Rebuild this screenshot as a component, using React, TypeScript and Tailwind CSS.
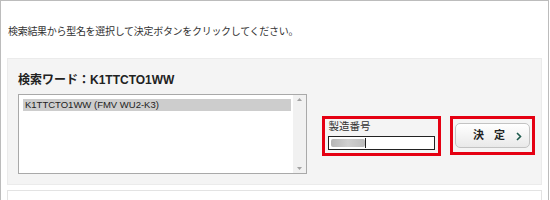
import React from "react";

const jp = { fontFamily: '"Liberation Sans", "Noto Sans CJK JP", sans-serif' };

export default function App() {
  return (
    <div className="w-[550px] h-[200px] overflow-hidden bg-white" style={jp}>
      <div className="w-[549px] h-[210px] border-l border-t border-r border-[#bcbcbc] px-[6px]">
        <p className="pt-[25px] pl-[1px] text-[10px] leading-[12px] text-[#333] tracking-[-0.3px]">
          検索結果から型名を選択して決定ボタンをクリックしてください。
        </p>
        <div className="mt-[20px] h-[127px] bg-[#f4f4f4] border border-[#ebebeb] pl-[10px] pr-[6px]">
          <h2 className="mt-[14px] text-[12px] leading-[14px] font-bold text-[#222]">
            検索ワード：K1TTCTO1WW
          </h2>
          <div className="mt-[7px] flex items-start">
            <div className="w-[290px] h-[80px] bg-white border border-[#a9a9a9] flex">
              <div className="flex-1 pt-[4px] pl-[4px] pr-[2px]">
                <div className="h-[12px] bg-[#cdcdcd] text-[9.5px] leading-[12px] text-[#222] pl-[2px]">
                  K1TTCTO1WW (FMV WU2-K3)
                </div>
              </div>
              <div className="w-[13px] bg-[#f1f1f1] flex flex-col justify-between items-center py-[3px]">
                <svg width="5" height="3" viewBox="0 0 5 3"><path d="M0 3 L2.5 0 L5 3 Z" fill="#a3a3a3" /></svg>
                <svg width="5" height="3" viewBox="0 0 5 3"><path d="M0 0 L2.5 3 L5 0 Z" fill="#a3a3a3" /></svg>
              </div>
            </div>
            <div className="ml-[15px] mt-[22px] w-[119px] h-[40px] border-[3px] border-[#e50012] pl-[3px] pt-[1px]">
              <div className="text-[10.5px] leading-[13px] text-[#333]">製造番号</div>
              <div className="mt-[3px] w-[107px] h-[14px] border-[1.5px] border-[#222] bg-white flex items-center px-[2px]">
                <div className="w-[34px] h-[8px] bg-gradient-to-r from-[#b5b5b5] via-[#cfcfcf] to-[#bdbdbd] rounded-[2px]" />
                <div className="w-[1px] h-[10px] bg-[#222]" />
              </div>
            </div>
            <div className="ml-[9px] mt-[22px] w-[85px] h-[39px] border-[3px] border-[#e50012] flex items-center justify-center">
              <div className="w-[75px] h-[25px] rounded-[5px] border border-[#c3c3c3] bg-gradient-to-b from-white to-[#e9e9e9] flex items-center relative">
                <span className="ml-[17px] text-[11px] font-bold text-[#222] tracking-[10px]">決定</span>
                <svg className="absolute right-[7px] top-[8px]" width="6" height="9" viewBox="0 0 6 9">
                  <path d="M1 1 L4.5 4.5 L1 8" fill="none" stroke="#1e5a4c" strokeWidth="1.6" />
                </svg>
              </div>
            </div>
          </div>
        </div>
        <div className="mt-[5px] h-[20px] border border-[#e3e3e3] bg-white" />
      </div>
    </div>
  );
}
